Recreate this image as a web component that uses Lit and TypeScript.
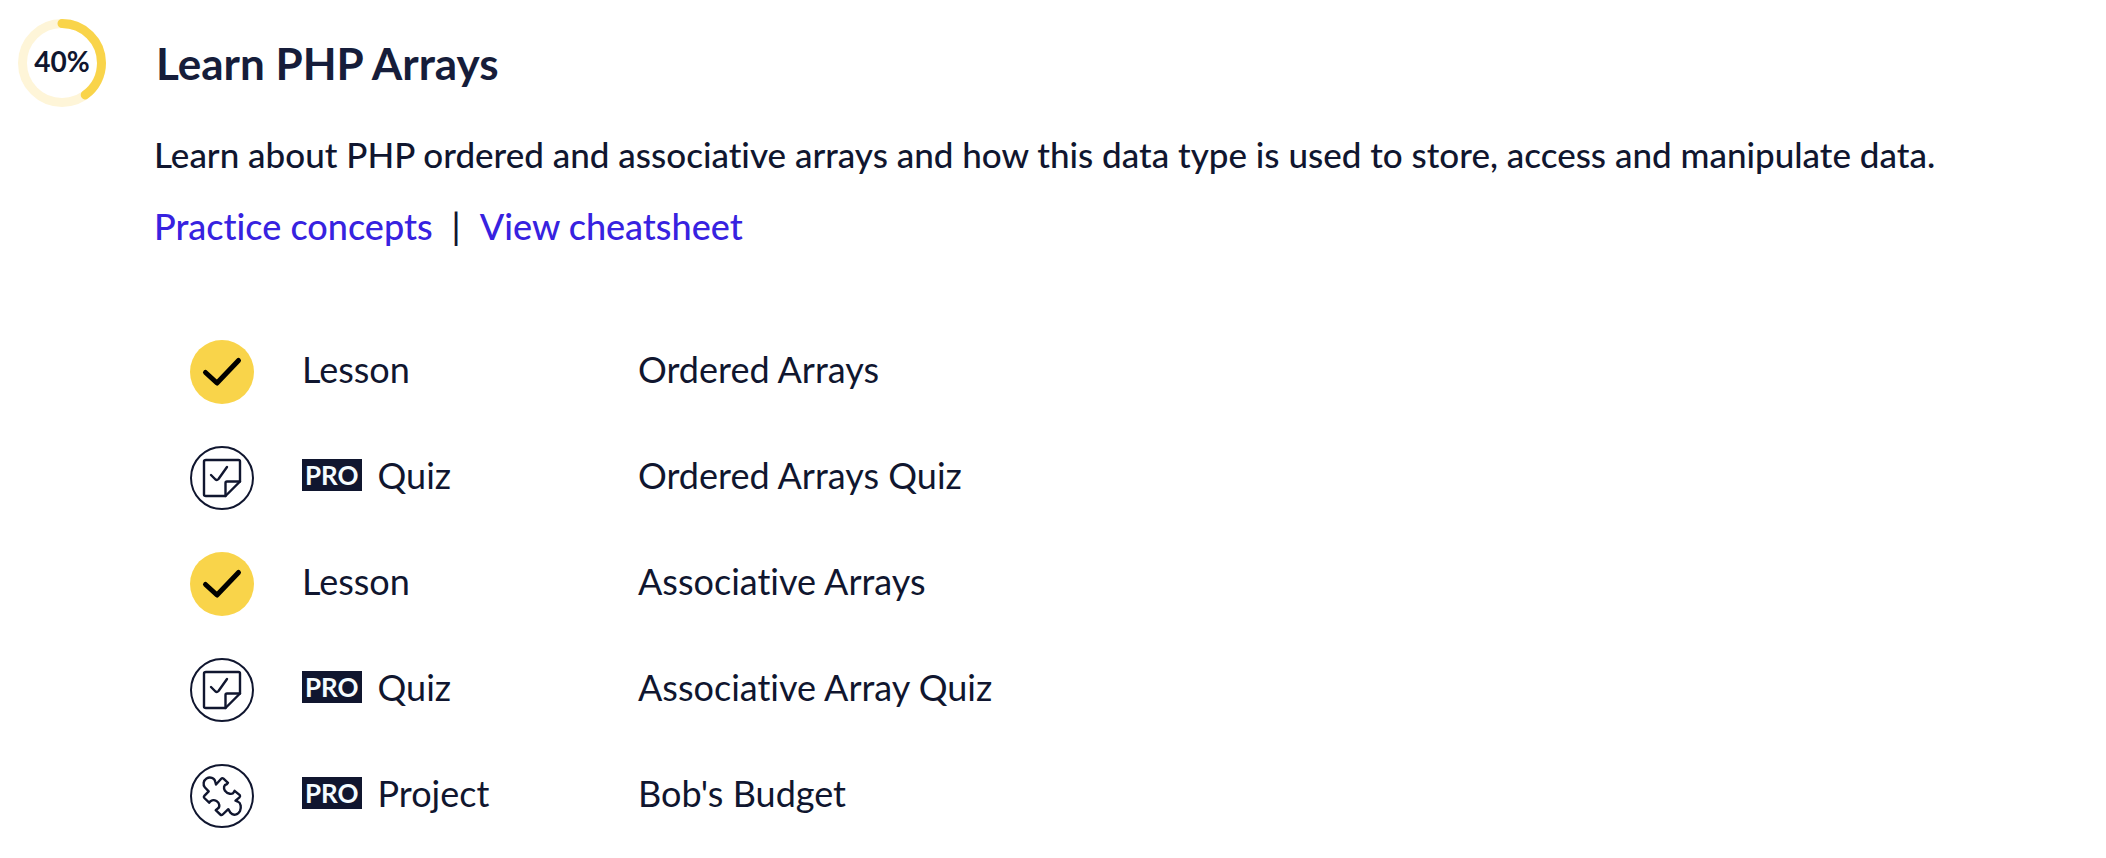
import { LitElement, html, css, svg } from "lit";
import { customElement, property } from "lit/decorators.js";

type Kind = "lesson" | "quiz" | "project";

interface Item {
  kind: Kind;
  label: string;
  title: string;
  pro: boolean;
  done: boolean;
}

const ITEMS: Item[] = [
  { kind: "lesson", label: "Lesson", title: "Ordered Arrays", pro: false, done: true },
  { kind: "quiz", label: "Quiz", title: "Ordered Arrays Quiz", pro: true, done: false },
  { kind: "lesson", label: "Lesson", title: "Associative Arrays", pro: false, done: true },
  { kind: "quiz", label: "Quiz", title: "Associative Array Quiz", pro: true, done: false },
  { kind: "project", label: "Project", title: "Bob's Budget", pro: true, done: false },
];

@customElement("progress-ring")
class ProgressRing extends LitElement {
  @property({ type: Number }) value = 0;

  static styles = css`
    :host {
      display: grid;
      place-items: center;
      width: 88px;
      height: 88px;
    }
    .ring,
    .value {
      grid-area: 1 / 1;
    }
    .ring {
      width: 88px;
      height: 88px;
      fill: none;
      stroke-width: 9;
    }
    .track {
      stroke: #fef5d8;
    }
    .bar {
      stroke: #f9d44a;
      stroke-linecap: round;
    }
    .value {
      font-size: 28px;
      line-height: 32px;
      font-weight: 700;
      padding-bottom: 4px;
    }
  `;

  render() {
    const d = "M44 4.5A39.5 39.5 0 0 1 44 83.5A39.5 39.5 0 0 1 44 4.5";
    return html`
      <svg class="ring" viewBox="0 0 88 88" aria-hidden="true">
        <path class="track" d=${d} />
        <path class="bar" d=${d} pathLength="100" stroke-dasharray="${this.value} 100" />
      </svg>
      <span class="value">${this.value}%</span>
    `;
  }
}

@customElement("status-icon")
class StatusIcon extends LitElement {
  @property() kind: Kind = "lesson";
  @property({ type: Boolean }) done = false;

  static styles = css`
    :host {
      display: block;
      width: 64px;
      height: 64px;
    }
    .icon {
      display: block;
      width: 64px;
      height: 64px;
      fill: none;
      stroke: #10162f;
      stroke-width: 2;
      stroke-linecap: round;
      stroke-linejoin: round;
    }
    .disc {
      fill: #f9d44a;
      stroke: none;
    }
    .tick {
      stroke: #000;
      stroke-width: 5;
    }
    .glyph {
      stroke-width: 2.4;
    }
  `;

  private glyph() {
    if (this.done) {
      return svg`
        <circle class="disc" cx="32" cy="32" r="32" />
        <path class="tick" d="M15.5 32.5L27 43L48.5 20.5" />`;
    }
    if (this.kind === "quiz") {
      return svg`
        <circle cx="32" cy="32" r="31" />
        <g class="glyph">
          <path d="M16 14H48.500Q50 14 50 15.500V35.500L35.500 50H16Q14 50 14 48.500V15.500Q14 14 16 14Z" />
          <path d="M35.500 50V37Q35.500 35.500 37 35.500H50" />
          <path d="M21 29L25.500 33.500Q27 34.500 28.500 33L37 21" />
        </g>`;
    }
    return svg`
      <circle cx="32" cy="32" r="31" />
      <path class="glyph" d="M18.700 27.300L15 23.500C12.500 20.500 13.500 16.500 16.500 14.500C20 12.500 24.500 14 25.200 17.500L26 20.500L31.200 14.800Q32.300 13.600 33.500 14.700L38 18.800L36.800 20.200C33.800 20.700 33.200 24 35 26.800C37.300 30 42.500 31 43.800 28.200L44.600 26.800L49.800 31.200Q50.500 32.300 49.500 33.300L45.500 36.700L47.700 37.500C51 38.800 51.500 43.500 50 47C48 51 43 52 40.500 48.800L38.300 45.200L32.700 50.500Q31.500 51.600 30.300 50.500L25.700 46.200L27.500 44.800C30.500 43 29.500 38.800 26.500 37C23.500 35.400 20.500 36.200 19.200 38.700L14.300 34Q13.300 33 14.300 31.900Z" />`;
  }

  render() {
    return html`<svg class="icon" viewBox="0 0 64 64" aria-hidden="true">${this.glyph()}</svg>`;
  }
}

@customElement("app-root")
class AppRoot extends LitElement {
  static styles = css`
    :host {
      display: block;
      background: #fff;
      color: #10162f;
      font-family: Lato, "Liberation Sans", sans-serif;
      font-variant-ligatures: none;
    }
    .module {
      display: grid;
      grid-template-columns: 88px minmax(0, 1fr);
      column-gap: 48px;
      padding: 19px 48px 24px 18px;
    }
    .title {
      margin: 0;
      padding-top: 18px;
      padding-left: 2px;
      font-size: 44px;
      line-height: 52px;
      font-weight: 700;
      color: #161d3a;
    }
    .body {
      grid-column: 2;
      padding-top: 23px;
    }
    .text {
      margin: 0;
      font-size: 35px;
      line-height: 48px;
      font-weight: 500;
    }
    .links {
      display: flex;
      flex-wrap: wrap;
      gap: 19px;
      padding-top: 24px;
      font-size: 36px;
    }
    .link {
      color: #3722e0;
      text-decoration: none;
    }
    .items {
      list-style: none;
      margin: 0;
      padding: 90px 0 0 36px;
      display: grid;
      row-gap: 42px;
    }
    .item {
      display: grid;
      grid-template-columns: 64px 288px minmax(0, 1fr);
      column-gap: 48px;
      color: inherit;
      text-decoration: none;
      font-size: 36px;
      line-height: 58px;
    }
    .kind {
      display: flex;
      align-items: center;
      gap: 16px;
      height: 58px;
    }
    .pro {
      background: #10162f;
      color: #f5fcff;
      font-size: 26px;
      line-height: 32px;
      font-weight: 700;
      padding: 0 3px;
    }
  `;

  render() {
    return html`
      <section class="module">
        <progress-ring value="40"></progress-ring>
        <h2 class="title">Learn PHP Arrays</h2>
        <div class="body">
          <p class="text">
            Learn about PHP ordered and associative arrays and how this data type is used to store,
            access and manipulate data.
          </p>
          <nav class="text links">
            <a class="link" href="#practice">Practice concepts</a>
            <span>|</span>
            <a class="link" href="#cheatsheet">View cheatsheet</a>
          </nav>
          <ul class="items">
            ${ITEMS.map(
              (item, i) => html`
                <li>
                  <a class="item" href="#item-${i + 1}">
                    <status-icon kind=${item.kind} ?done=${item.done}></status-icon>
                    <span class="kind">
                      ${item.pro ? html`<span class="pro">PRO</span>` : null}
                      <span>${item.label}</span>
                    </span>
                    <span>${item.title}</span>
                  </a>
                </li>
              `,
            )}
          </ul>
        </div>
      </section>
    `;
  }
}
